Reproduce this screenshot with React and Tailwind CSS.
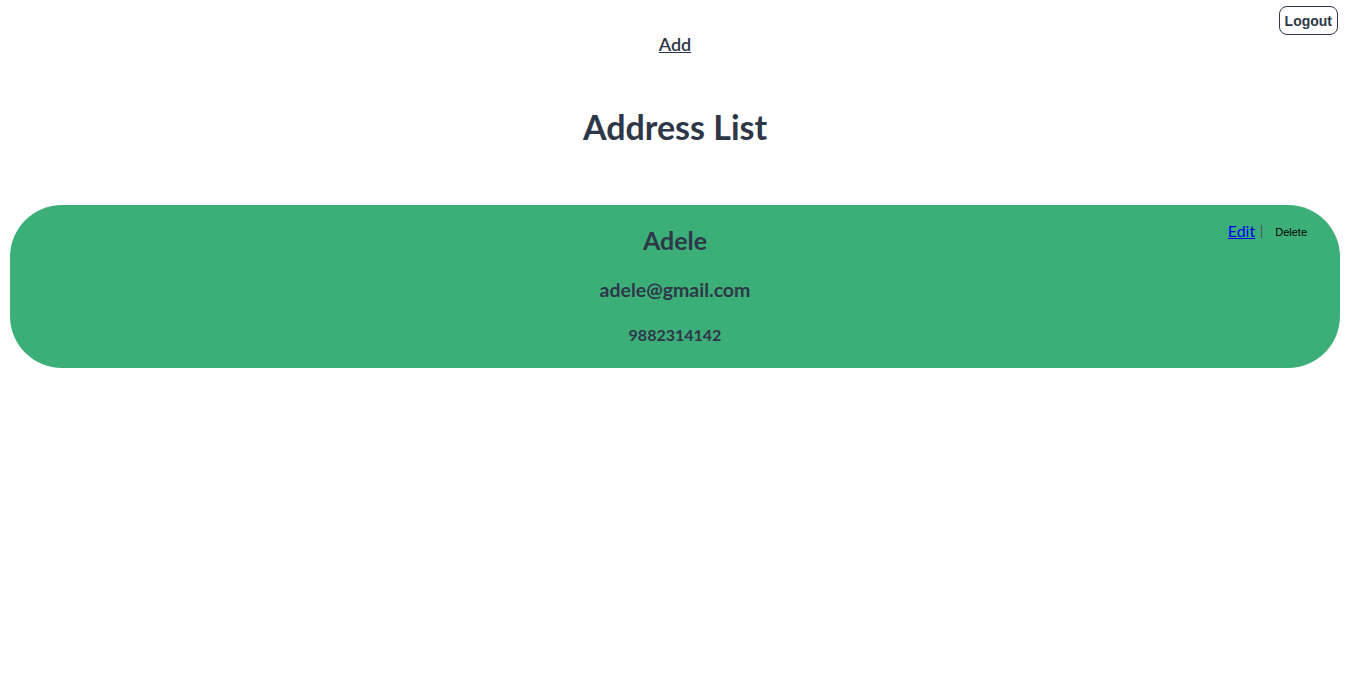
import React from "react";

const contacts = [
  { id: 1, name: "Adele", email: "adele@gmail.com", phone: "9882314142" },
];

export default function App() {
  return (
    <div className="relative w-[1350px] min-h-[685px] bg-white text-[#2d3748] font-['Lato','Noto_Sans',sans-serif]">
      {/* Logout */}
      <button className="absolute right-3 top-1.5 h-[29px] px-[5px] border border-[#2d3748] rounded-lg text-[14px] font-bold font-['Liberation_Sans',Arial,sans-serif] leading-none">
        Logout
      </button>

      {/* Nav */}
      <nav className="flex justify-center pt-[33px]">
        <a href="#" className="text-[18px] font-semibold underline leading-[22px]">
          Add
        </a>
      </nav>

      <h1 className="mt-[52px] text-center text-[34px] font-bold leading-[40px]">
        Address List
      </h1>

      <div className="mt-[58px] px-[10px]">
        {contacts.map((c) => (
          <div
            key={c.id}
            className="relative h-[163px] rounded-[52px] bg-[#3caf79] flex flex-col items-center pt-[20px]"
          >
            <div className="absolute right-[33px] top-[15px] flex items-center">
              <a href="#" className="text-[16px] text-[#0000ee] underline leading-[22px]">
                Edit
              </a>
              <span className="ml-[6px] w-px h-[13px] bg-[#555]" />
              <button className="ml-[13px] text-[11px] text-black font-['Liberation_Sans',Arial,sans-serif] leading-none mt-[3px]">
                Delete
              </button>
            </div>
            <h2 className="text-[25px] font-bold leading-[30px]">{c.name}</h2>
            <p className="mt-[23px] text-[19.5px] font-bold leading-[24px]">{c.email}</p>
            <p className="mt-[23px] text-[16px] font-bold leading-[20px]">{c.phone}</p>
          </div>
        ))}
      </div>
    </div>
  );
}
